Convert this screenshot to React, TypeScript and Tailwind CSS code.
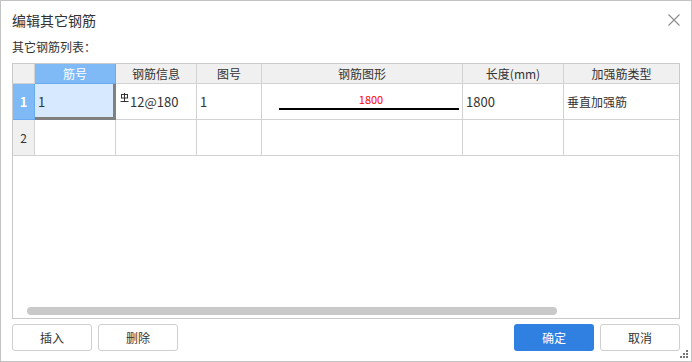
import React from 'react';

const font = { fontFamily: '"Noto Sans CJK SC", "Microsoft YaHei", sans-serif' };

const cols = [
  { key: 'no', title: '筋号', w: 'w-[81px]' },
  { key: 'info', title: '钢筋信息', w: 'w-[81px]' },
  { key: 'fig', title: '图号', w: 'w-[65px]' },
  { key: 'shape', title: '钢筋图形', w: 'w-[201px]' },
  { key: 'len', title: '长度(mm)', w: 'w-[101px]' },
  { key: 'type', title: '加强筋类型', w: 'w-[115px]' },
];

const RebarMark = () => (
  <svg width="9" height="9" viewBox="0 0 9 9" className="self-start mt-[1px] mr-[1px]">
    <rect x="1.5" y="1.5" width="6" height="3.5" fill="none" stroke="#333" strokeWidth="1" />
    <line x1="4.5" y1="0" x2="4.5" y2="8.5" stroke="#333" strokeWidth="1" />
    <line x1="0.5" y1="8.5" x2="8.5" y2="8.5" stroke="#333" strokeWidth="1" />
  </svg>
);

const App: React.FC = () => {
  return (
    <div
      style={font}
      className="relative w-[692px] h-[362px] border border-[#c3c3c3] bg-white flex flex-col px-[11px] text-[#333] overflow-hidden"
    >
      {/* title bar */}
      <div className="h-[38px] flex items-center justify-between">
        <span className="text-[14px]">编辑其它钢筋</span>
        <svg width="12" height="12" viewBox="0 0 12 12">
          <path d="M0.5 0.5 L11.5 11.5 M11.5 0.5 L0.5 11.5" stroke="#8c8c8c" strokeWidth="1.1" />
        </svg>
      </div>

      <div className="h-[16px] flex items-center text-[12px]">其它钢筋列表：</div>

      {/* table */}
      <div className="mt-[8px] h-[256px] border border-[#cacaca] flex flex-col">
        {/* header */}
        <div className="flex h-[20px] text-[12px]">
          <div className="w-[22px] bg-[#f0f0f0] border-r border-b border-[#d2d2d2]" />
          {cols.map((c, i) => (
            <div
              key={c.key}
              className={`${c.w} flex items-center justify-center border-b ${
                i < cols.length - 1 ? 'border-r' : ''
              } ${
                i === 0
                  ? 'bg-[#7fbaf6] border-[#69a9ee] text-white'
                  : 'bg-[#f0f0f0] border-[#d2d2d2]'
              }`}
            >
              {c.title}
            </div>
          ))}
        </div>

        {/* row 1 */}
        <div className="flex h-[36px] text-[13px]">
          <div className="w-[22px] bg-[#7fbaf6] border-r border-b border-[#69a9ee] flex items-center justify-center text-white font-bold">
            1
          </div>
          <div className="w-[81px] bg-[#d6e9fe] border-r border-b border-[#808080] shadow-[inset_-2px_-2px_0_#808080] flex items-center pl-[3px]">
            1
          </div>
          <div className="w-[81px] border-r border-b border-[#d2d2d2] flex items-center pl-[4px]">
            <span className="flex items-start">
              <RebarMark />
              <span>12@180</span>
            </span>
          </div>
          <div className="w-[65px] border-r border-b border-[#d2d2d2] flex items-center pl-[3px]">1</div>
          <div className="w-[201px] border-r border-b border-[#d2d2d2] flex flex-col justify-end pb-[9px] pl-[17px]">
            <div className="w-[180px] text-center text-[11px] leading-[12px] text-[#ff0000] pl-[4px] mb-[3px]">
              1800
            </div>
            <div className="w-[180px] h-[2px] bg-black" />
          </div>
          <div className="w-[101px] border-r border-b border-[#d2d2d2] flex items-center pl-[3px]">1800</div>
          <div className="w-[115px] border-b border-[#d2d2d2] flex items-center pl-[3px] text-[12px]">
            垂直加强筋
          </div>
        </div>

        {/* row 2 */}
        <div className="flex h-[36px] text-[13px]">
          <div className="w-[22px] bg-[#f0f0f0] border-r border-b border-[#d2d2d2] flex items-center justify-center text-[12px]">
            2
          </div>
          {cols.map((c, i) => (
            <div
              key={c.key}
              className={`${c.w} border-b border-[#d2d2d2] ${i < cols.length - 1 ? 'border-r' : ''}`}
            />
          ))}
        </div>

        <div className="flex-1" />
        {/* horizontal scrollbar */}
        <div className="ml-[14px] mb-[3px] w-[530px] h-[8px] rounded-full bg-[#c9c9c9]" />
      </div>

      {/* footer buttons */}
      <div className="mt-[5px] flex items-center justify-between text-[12px]">
        <div className="flex gap-[6px]">
          <button className="w-[80px] h-[27px] border border-[#cfcfcf] rounded-[3px] bg-white">插入</button>
          <button className="w-[80px] h-[27px] border border-[#cfcfcf] rounded-[3px] bg-white">删除</button>
        </div>
        <div className="flex gap-[6px]">
          <button className="w-[80px] h-[27px] rounded-[3px] bg-[#2f80e1] text-white">确定</button>
          <button className="w-[80px] h-[27px] border border-[#cfcfcf] rounded-[3px] bg-white">取消</button>
        </div>
      </div>

      {/* resize grip */}
      <svg width="8" height="8" viewBox="0 0 8 8" className="absolute right-[3px] bottom-[3px]">
        <rect x="6" y="0" width="2" height="2" fill="#777" />
        <rect x="3" y="3" width="2" height="2" fill="#777" />
        <rect x="6" y="3" width="2" height="2" fill="#777" />
        <rect x="0" y="6" width="2" height="2" fill="#777" />
        <rect x="3" y="6" width="2" height="2" fill="#777" />
        <rect x="6" y="6" width="2" height="2" fill="#777" />
      </svg>
    </div>
  );
};

export default App;
